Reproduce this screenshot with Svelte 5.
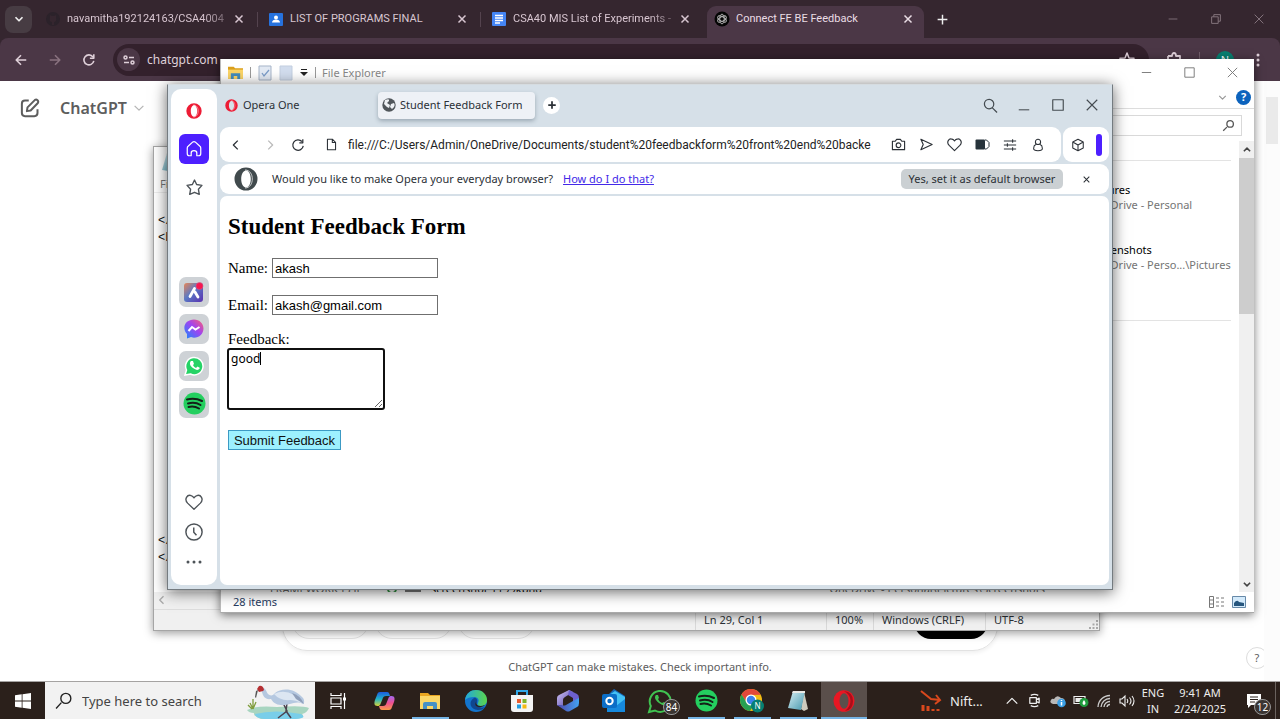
<script>
  const tabs = [
    { title: 'navamitha192124163/CSA4004', icon: 'github', faded: true },
    { title: 'LIST OF PROGRAMS FINAL', icon: 'classroom' },
    { title: 'CSA40 MIS List of Experiments -', icon: 'docs', faded: true },
    { title: 'Connect FE BE Feedback', icon: 'gpt', active: true }
  ];
  const pinned = ['taskview', 'copilot', 'folder', 'edge', 'store', 'm365', 'outlook', 'whatsapp', 'spotify', 'chrome', 'notepad', 'opera'];
  const running = ['folder', 'spotify', 'chrome', 'notepad', 'opera'];
  const sideApps = ['aria', 'messenger', 'wa', 'spot'];
  let address = $state('file:///C:/Users/Admin/OneDrive/Documents/student%20feedbackform%20front%20end%20backe');
  let name = $state('akash');
  let email = $state('akash@gmail.com');
  let feedback = $state('good');
</script>

{#snippet line(d, size = 16, w = 1.3)}
  <svg width={size} height={size} viewBox="0 0 16 16" fill="none" stroke="currentColor" stroke-width={w} stroke-linejoin="round" aria-hidden="true"><path {d} /></svg>
{/snippet}

{#snippet operaLogo(size, color)}
  <svg width={size} height={size} viewBox="0 0 24 24" aria-hidden="true"><path fill={color} fill-rule="evenodd" d="M12 .5a11.500 11.500 0 1 0 0 23 11.500 11.500 0 0 0 0-23Zm0 3c2.800 0 4.800 3.800 4.800 8.500s-2 8.500-4.800 8.500-4.800-3.800-4.800-8.500 2-8.500 4.800-8.500Z" /><path d="M11 3c5 0 7.300 4.500 7.300 9s-2.300 9-7.300 9" fill="none" stroke="#fff" stroke-width="1" opacity=".7" /></svg>
{/snippet}

{#snippet picture(kind)}
  {#if kind === 'github'}
    <svg width="16" height="16" viewBox="0 0 16 16"><circle cx="8" cy="8" r="7" fill="#2b222a" /><path d="M5 4l2 1h2l2-1v3c1 3-1 4-2 4v3H7v-3c-2 0-3-2-2-4Z" fill="#35262f" /></svg>
  {:else if kind === 'classroom'}
    <svg width="16" height="16" viewBox="0 0 16 16"><rect x="1" y="2" width="14" height="13" rx="1" fill="#2672de" /><circle cx="8" cy="6.500" r="2" fill="#fff" /><path d="M4 11.500c0-4 8-4 8 0Z" fill="#fff" /></svg>
  {:else if kind === 'docs'}
    <svg width="16" height="16" viewBox="0 0 16 16"><rect x="1" y="1" width="14" height="14" rx="1" fill="#4485f5" /><path d="M4 4.500h8M4 7h8M4 9.500h8M4 12h5" stroke="#fff" stroke-width="1.500" /></svg>
  {:else if kind === 'gpt'}
    <svg width="16" height="16" viewBox="0 0 16 16"><circle cx="8" cy="8" r="7.500" fill="#050505" /><g fill="none" stroke="#b5b5b5" stroke-width=".9"><ellipse cx="8" cy="8" rx="2.200" ry="4.800" /><ellipse cx="8" cy="8" rx="2.200" ry="4.800" transform="rotate(60 8 8)" /><ellipse cx="8" cy="8" rx="2.200" ry="4.800" transform="rotate(120 8 8)" /></g></svg>
  {:else if kind === 'taskview'}
    <svg width="18" height="18" viewBox="0 0 18 18" fill="none" stroke="#fff" stroke-width="1.200"><path d="M2 1v2.500h10V1M2 17v-2.500h10V17M2 6h10v6H2zM15.500 1v16" /><path d="M14 5.500h3v3h-3z" fill="#fff" stroke="none" /></svg>
  {:else if kind === 'copilot'}
    <svg width="23" height="22" viewBox="0 0 23 22"><defs><linearGradient id="ca" x1="0" y1="0" x2="0" y2="1"><stop offset="0" stop-color="#1c5be0" /><stop offset=".5" stop-color="#20b3c8" /><stop offset="1" stop-color="#d8d338" /></linearGradient><linearGradient id="cb" x1="0" y1="0" x2="0" y2="1"><stop offset="0" stop-color="#a468f0" /><stop offset=".5" stop-color="#ee5090" /><stop offset="1" stop-color="#f89a48" /></linearGradient></defs><path d="M7 2h7c2 0 2.500 2 3 4h-4c-2 0-3 1-3.500 3l-2 5c-.5 1.500-1.500 2-3 2C1 16 1 13 2 10l2-5c.5-2 1.300-3 3-3Z" fill="url(#ca)" /><path d="M16 20H9c-2 0-2.500-2-3-4h4c2 0 3-1 3.500-3l2-5c.5-1.500 1.500-2 3-2 3.500 0 3.500 3 2.500 6l-2 5c-.5 2-1.300 3-3 3Z" fill="url(#cb)" /></svg>
  {:else if kind === 'folder'}
    <svg width="21" height="20" viewBox="0 0 21 20"><path d="M0 2h8l2 2h10v14H0z" fill="#e9a520" /><path d="M0 5h20v13H0z" fill="#fbd667" /><path d="M3 18v-5q0-2 2-2h10q2 0 2 2v5h-4v-3H7v3z" fill="#4790c5" /></svg>
  {:else if kind === 'edge'}
    <svg width="24" height="24" viewBox="0 0 24 24"><defs><linearGradient id="ed" x1="0" y1="0" x2="1" y2="0"><stop offset="0" stop-color="#20a7de" /><stop offset="1" stop-color="#5bd54b" /></linearGradient></defs><circle cx="12" cy="12" r="11" fill="#1374cd" /><path d="M1 11C2 4 7 1 12 1c7 0 11 5 11 10 0 4-3 6-6 6s-4-1-3-3c2-4-1-6-4-6-4 0-7 1-9 3Z" fill="url(#ed)" /><path d="M10 9c-6 3-4 12 4 12 3 0 6-1 7-3-5 2-10-1-8-5 1-2-1-5-3-4Z" fill="#10468f" /><path d="M12 13c0 4 4 5 9 3-4 4-12 2-9-3Z" fill="#2b201b" /></svg>
  {:else if kind === 'store'}
    <svg width="24" height="24" viewBox="0 0 24 24"><path d="M7 6V2h10v4" fill="none" stroke="#31a8e8" stroke-width="2" /><path d="M1 6h22v14q0 3-3 3H4q-3 0-3-3z" fill="#f4f4f4" /><path d="M7 10h4v4H7z" fill="#e85a2d" /><path d="M12.500 10h4v4h-4z" fill="#7cb52b" /><path d="M7 15.500h4v4H7z" fill="#229de2" /><path d="M12.500 15.500h4v4h-4z" fill="#f4b913" /></svg>
  {:else if kind === 'm365'}
    <svg width="24" height="24" viewBox="0 0 24 24"><defs><linearGradient id="ma" x1="0" y1="0" x2="1" y2="1"><stop offset="0" stop-color="#d5c7f8" /><stop offset="1" stop-color="#4638a0" /></linearGradient><linearGradient id="mb"><stop offset="0" stop-color="#5145ac" /><stop offset="1" stop-color="#43a2f0" /></linearGradient></defs><path d="M13 1 3 6Q1 7 1 9v7l6 3v-8q0-2 2-3l8-5z" fill="url(#ma)" /><path d="m13 1 8 4q2 1 2 4v5l-6-2V9l-5-3z" fill="#6d60cf" /><path d="m1 16 9 6q2 1 4 0l7-4q2-1 2-4V9l-6 3-7 4q-2 1-4 0z" fill="url(#mb)" /></svg>
  {:else if kind === 'outlook'}
    <svg width="24" height="24" viewBox="0 0 24 24"><path d="M12 0 23 7v14H5V7z" fill="#1668b8" /><path d="m7 6 6-4 10 6v5L13 18z" fill="#42c1f5" /><path d="m5 11 9 6 9-7v13H5z" fill="#1689dd" /><rect y="5" width="15" height="14" rx="2" fill="#0b6ec7" /><circle cx="7.500" cy="12" r="3.200" fill="none" stroke="#fff" stroke-width="2" /></svg>
  {:else if kind === 'whatsapp'}
    <svg width="26" height="26" viewBox="0 0 26 26"><path d="m2 24 1.800-6A10.500 10.500 0 1 1 8 22.500Z" fill="#2b201b" stroke="#40c351" stroke-width="2" /><path d="M9 7c-2 2-1 5 3 8s6 3 8 1l-3-2-2 1c-2-1-3-2-4-4l1-1-1-3Z" fill="#40c351" /></svg>
  {:else if kind === 'spotify' || kind === 'spot'}
    <svg width="23" height="23" viewBox="0 0 23 23"><circle cx="11.500" cy="11.500" r="11" fill="#24cf5f" /><path d="M4 7.500q8-2 15 1.500M5 11.500q7-2 12.500 1.500M5.500 15q5.500-1.500 10.500 1.500" fill="none" stroke="#142018" stroke-width="2" stroke-linecap="round" /></svg>
  {:else if kind === 'chrome'}
    <svg width="24" height="26" viewBox="0 0 24 26"><circle cx="11" cy="12" r="11" fill="#f3bd13" /><path d="M1.500 6.500A11 11 0 0 1 20.600 6.700L11 7 6.700 14.500Z" fill="#e2483b" /><path d="M1.500 6.500A11 11 0 0 0 10 23l5-8.500H6.700Z" fill="#27a052" /><circle cx="11" cy="12" r="5.500" fill="#fff" /><circle cx="11" cy="12" r="4.200" fill="#3b82eb" /><circle cx="17.500" cy="18" r="6.500" fill="#067f72" /><text x="17.500" y="21" fill="#fff" font-size="8" text-anchor="middle">N</text></svg>
  {:else if kind === 'notepad'}
    <svg width="22" height="22" viewBox="0 0 22 22"><defs><linearGradient id="np" x2="1" y2="1"><stop offset="0" stop-color="#d9f0f5" /><stop offset="1" stop-color="#4597ad" /></linearGradient></defs><path d="m17 2 4 17-4 2-3-2z" fill="#cfcabc" /><path d="M6 1h12l-4 19L1 18z" fill="url(#np)" /><path d="M6 1h12v2H5z" fill="#e9e9e5" /></svg>
  {:else if kind === 'opera'}
    <svg width="22" height="22" viewBox="0 0 22 22"><ellipse cx="11" cy="11" rx="10.500" ry="10.800" fill="#e81723" /><path d="M11 1q9 1 9 10t-8 10c8-6 7-16-1-20Z" fill="#a90d19" /><ellipse cx="11" cy="11" rx="4.500" ry="7.800" fill="#5a4f4b" /></svg>
  {:else if kind === 'aria'}
    <svg width="20" height="20" viewBox="0 0 20 20"><defs><linearGradient id="ar" x1="0" y1="0" x2="1" y2="1"><stop offset="0" stop-color="#e98555" /><stop offset=".45" stop-color="#5a7ac5" /><stop offset="1" stop-color="#5a30b0" /></linearGradient></defs><rect y="1" width="19" height="19" rx="3" fill="url(#ar)" /><path d="m6 14.500 4.500-8M11 10l3 5" stroke="#fff" stroke-width="2.800" stroke-linecap="round" /><circle cx="15.500" cy="4" r="3.500" fill="#f8174f" stroke="#c95c8a" stroke-width=".6" /></svg>
  {:else if kind === 'messenger'}
    <svg width="20" height="20" viewBox="0 0 20 20"><defs><linearGradient id="ms" x1="1" y1="0" x2="0" y2="1"><stop offset="0" stop-color="#ff6070" /><stop offset=".45" stop-color="#a044f0" /><stop offset="1" stop-color="#168aff" /></linearGradient></defs><path d="M10 .5c5.500 0 9.500 4 9.500 9s-4 9.300-9.500 9.300L7 18l-4 1.500V15C-3 8 2 .5 10 .5Z" fill="url(#ms)" /><path d="m4.500 12 3.500-4 3.500 2.500L15.500 8" fill="none" stroke="#fff" stroke-width="2" /></svg>
  {:else if kind === 'wa'}
    <svg width="20" height="20" viewBox="0 0 20 20"><path d="m1 19 1.500-5A8.700 8.700 0 1 1 6.500 18Z" fill="#25d366" stroke="#fff" stroke-width="1.500" /><path d="M7 5c-2 2-1 5 2 7s5 3 7 0l-2.500-1.500L12 12c-2-1-2.500-2-3-3l1-1-1-3Z" fill="#fff" /></svg>
  {/if}
{/snippet}

<main class="desktop">
  <section class="browser" aria-label="Browser">
    <div class="tabstrip">
      <button class="tabsearch" aria-label="Search tabs">{@render line('m4 6 4 4 4-4', 14, 2)}</button>
      {#each tabs as tab}
        <div class="tab" class:active={tab.active}>
          {@render picture(tab.icon)}
          <span class:faded={tab.faded}>{tab.title}</span>
          <button aria-label="Close tab">{@render line('m4 4 8 8M12 4l-8 8', 14, 1.700)}</button>
        </div>
      {/each}
      <button class="newtab" aria-label="New tab">{@render line('M8 2v12M2 8h12', 13, 1.800)}</button>
      <div class="winctl dim">
        <button aria-label="Minimize">{@render line('M3 8h10', 14, 1)}</button>
        <button aria-label="Restore">{@render line('M3 5.500h7.500V13H3zM5.500 5.500V3H13v7.500h-2.500', 14, 1.100)}</button>
        <button aria-label="Close">{@render line('m3 3 10 10M13 3 3 13', 14, 1.100)}</button>
      </div>
    </div>
    <div class="toolbar">
      <button aria-label="Back">{@render line('M14 8H3m5-5.500L2.500 8 8 13.500', 14, 1.800)}</button>
      <button class="off" aria-label="Forward">{@render line('M2 8h11M8 2.500 13.500 8 8 13.500', 14, 1.800)}</button>
      <button aria-label="Reload">{@render line('M13.500 9A5.700 5.700 0 1 1 12.500 4.500M13.500 1.500V6H9', 14, 1.800)}</button>
      <div class="omni">
        <span class="site">{@render line('M3 5.500a1.500 1.500 0 1 0 3 0 1.500 1.500 0 0 0-3 0M8 5.500h5M10 10.500a1.500 1.500 0 1 0 3 0 1.500 1.500 0 0 0-3 0M3 10.500h5', 16, 1.500)}</span>
        <span class="host">chatgpt.com</span>
        {@render line('m8 1 2 5 5 .3-4 3.200 1.300 5L8 12l-4.300 2.500L5 9.500 1 6.300 6 6Z', 16, 1.500)}
      </div>
      <button aria-label="Extensions">{@render line('M2 4h4c0-4 4-4 4 0h4v4M2 4v4', 16, 1.800)}</button>
      <i></i>
      <span class="avatar">N</span>
      <button class="kebab" aria-label="Menu"><svg width="4" height="16" viewBox="0 0 4 16" fill="currentColor"><circle cx="2" cy="3" r="1.500" /><circle cx="2" cy="8" r="1.500" /><circle cx="2" cy="13" r="1.500" /></svg></button>
    </div>
    <div class="gpt">
      <header>
        <button aria-label="New chat">{@render line('M7 2H4Q1.500 2 1.500 4.500V12Q1.500 14.500 4 14.500h7.500Q14 14.500 14 12V9M6 7.500 12 1.500Q13 .8 14 1.800t.3 2.200L8.500 10 5.500 10.500Z', 20, 1.600)}</button>
        <strong>ChatGPT</strong>
        {@render line('m3 5.500 5 5 5-5', 14, 1.400)}
      </header>
      <div class="composer"><b></b><b></b><b></b><em></em></div>
      <p>ChatGPT can make mistakes. Check important info.</p>
      <button class="help">?</button>
      <div class="gscroll"><i></i></div>
    </div>
  </section>

  <section class="window editor" aria-label="Text editor">
    <div class="ntitle">{@render picture('notepad')}</div>
    <div class="nmenu">File</div>
    <div class="code"><pre>{'</\n<b'}</pre><pre>{'</\n</'}</pre></div>
    <div class="hscroll">{@render line('M10 3 5 8l5 5', 12, 1.800)}</div>
    <footer><span class="pos">Ln 29, Col 1</span><span class="zoom">100%</span><span class="eol">Windows (CRLF)</span><span class="enc">UTF-8</span>
      <svg width="10" height="10" viewBox="0 0 10 10" fill="#aaa"><path d="M7 0h2v2H7zM7 3.500h2v2H7zM3.500 3.500h2v2h-2zM7 7h2v2H7zM3.500 7h2v2h-2zM0 7h2v2H0z" /></svg>
    </footer>
  </section>

  <section class="window explorer" aria-label="File Explorer">
    <div class="etitle">
      <svg width="15" height="15" viewBox="0 0 21 20"><path d="M0 2h8l2 2h11v15H0z" fill="#dba01d" /><path d="M0 6h21v13H0z" fill="#fbd466" /><path d="M4 19v-8h13v8h-4v-4H8v4z" fill="#438cbc" /></svg>
      <u></u>
      <svg class="sheet" width="14" height="16" viewBox="0 0 14 16"><path d="M1 1h12v14H1z" fill="#e3eaf4" stroke="#a7b5c9" /><path d="m4 8 2 3 5-6" fill="none" stroke="#7b9cc8" stroke-width="1.300" /></svg>
      <svg width="14" height="16" viewBox="0 0 14 16"><path d="M1 1h12v14H1z" fill="#d2ddee" stroke="#c3cfe0" /></svg>
      <svg width="8" height="8" viewBox="0 0 8 8"><path d="M1 0h6v1H1zM0 3h8L4 7z" fill="#222" /></svg>
      <u></u>
      <span>File Explorer</span>
      <div class="winctl">
        <button aria-label="Minimize">{@render line('M3 8h10', 15, 1)}</button>
        <button aria-label="Maximize">{@render line('M3 3h10v10H3z', 15, 1)}</button>
        <button aria-label="Close">{@render line('m3 3 10 10M13 3 3 13', 15, 1)}</button>
      </div>
    </div>
    <div class="ribbon">{@render line('m4 6 4 4 4-4', 13, 1.500)}<button aria-label="Help">?</button></div>
    <div class="esearch"><div>{@render line('M6 10 1.500 14.500M6 6a4 4 0 1 0 8 0 4 4 0 0 0-8 0', 13, 1.600)}</div></div>
    <div class="ebody">
      <div class="results">
        <div class="item one"><div><b>Pictures</b><span>OneDrive - Personal</span></div></div>
        <div class="item two"><div><b>Screenshots</b><span>OneDrive - Perso...\Pictures</span></div></div>
        <div class="filerow"><span class="fw">FRAMEWORK IS JF</span><svg width="34" height="14" viewBox="0 0 34 14"><circle cx="5" cy="7" r="4" fill="none" stroke="#369344" stroke-width="2" /><path d="M18 2h16v10H18z" fill="#777" /></svg><b>screenshot 1199kbnd</b><span class="where">OneDrive - Personal\Pictures\Screenshots</span></div>
      </div>
      <div class="vscroll"><span>{@render line('m3 10 5-5 5 5', 10, 2.500)}</span><i></i><span class="dn">{@render line('m3 6 5 5 5-5', 10, 2.500)}</span></div>
    </div>
    <footer><span>28 items</span>
      <svg width="16" height="12" viewBox="0 0 16 12" fill="none" stroke="#777"><path d="M.5.500h4v11h-4zM.5 4h4M.5 8h4M7 2h3M7 6h3M7 10h3M12 2h3M12 6h3M12 10h3" /></svg>
      <svg width="14" height="12" viewBox="0 0 14 12"><path d="M.5.500h13v11H.5z" fill="#d3eafb" stroke="#6789a8" /><path d="M2 7q3-4 5-1l5 1v3H2z" fill="#26567e" /></svg>
    </footer>
  </section>

  <section class="window front" aria-label="Opera">
    <aside>
      <button aria-label="Opera menu">{@render operaLogo(16, '#ed1c35')}</button>
      <button class="home" aria-label="Home">{@render line('M2 7Q2 6 3 5.300l4-3.600Q8 1 9 1.700l4 3.600Q14 6 14 7v5q0 2-2 2h-1.500v-2.500q0-2-2.500-2t-2.500 2V14H4q-2 0-2-2Z', 18, 1.100)}</button>
      <button aria-label="Bookmarks">{@render line('m8 1 2 4.200 5 .8-3.300 3.700.8 4.800L8 12.500 3.500 14.500l.8-4.800L1 6l5-.8Z', 17, 1.300)}</button>
      <div class="apps">
        {#each sideApps as app}<button aria-label={app}>{@render picture(app)}</button>{/each}
      </div>
      <button class="last" aria-label="Favourites">{@render line('M8 14.500 2.300 9C-1 5.500 2 1 5.500 2.300Q7 2.800 8 4.300q1-1.500 2.500-2C14 1 17 5.500 13.700 9Z', 18, 1.200)}</button>
      <button aria-label="History">{@render line('M8 .8a7.200 7.200 0 1 0 0 14.400A7.200 7.200 0 0 0 8 .8M7.800 4v4.200l2.400 2.600', 18, 1.300)}</button>
      <button aria-label="More"><svg width="16" height="4" viewBox="0 0 16 4" fill="currentColor"><circle cx="2" cy="2" r="1.500" /><circle cx="8" cy="2" r="1.500" /><circle cx="14" cy="2" r="1.500" /></svg></button>
    </aside>
    <div class="omain">
      <div class="otabs">
        <div class="ostart">{@render operaLogo(13, '#ed1c35')}<span>Opera One</span></div>
        <div class="otab"><svg width="14" height="14" viewBox="0 0 14 14"><circle cx="7" cy="7" r="6.700" fill="#50565b" /><path d="M3 2q5-2 4 1L5 5l3 2-1 3-2-1-3-3zM9 6l3-1q2 3-2 6l-2-2z" fill="#eef1f5" /></svg><span>Student Feedback Form</span></div>
        <button class="plus" aria-label="New tab">{@render line('M8 2v12M2 8h12', 10, 2.800)}</button>
        <div class="octl">
          <button aria-label="Search">{@render line('M1.500 6.500a5 5 0 1 0 10 0 5 5 0 0 0-10 0M10 10.500l5 5', 15, 1.300)}</button>
          <button aria-label="Minimize">{@render line('M2 13.500h12', 14, 1.200)}</button>
          <button aria-label="Maximize">{@render line('M2 2h12v12H2z', 14, 1.300)}</button>
          <button aria-label="Close">{@render line('m2 2 12 12M14 2 2 14', 14, 1.300)}</button>
        </div>
      </div>
      <div class="obar">
        <div class="addr">
          <button aria-label="Back">{@render line('M10 3 5 8l5 5', 14, 1.500)}</button>
          <button class="pale" aria-label="Forward">{@render line('m6 3 5 5-5 5', 14, 1.500)}</button>
          <button aria-label="Reload">{@render line('M14 9A6 6 0 1 1 12.500 4M13.500 1.500v4h-4', 14, 1.400)}</button>
          <span class="doc">{@render line('M3 1.500h6L13 5.500v9H3ZM9 1.500v4h4', 13, 1.300)}</span>
          <input aria-label="Address" bind:value={address} />
          <div class="tools">
            <button aria-label="Snapshot">{@render line('M1.500 4.500h3l1.500-2h4l1.500 2h3v9h-13ZM5.500 8.800a2.500 2.500 0 1 0 5 0 2.500 2.500 0 0 0-5 0', 15, 1.200)}</button>
            <button aria-label="Flow">{@render line('m2 2.500 12 5.500-12 5.500L4.500 8Z', 15, 1.200)}</button>
            <button aria-label="Pin">{@render line('M8 14.500 2.300 9C-1 5.500 2 1 5.500 2.300Q7 2.800 8 4.300q1-1.500 2.500-2C14 1 17 5.500 13.700 9Z', 15, 1.200)}</button>
            <button aria-label="Battery saver"><svg width="15" height="11" viewBox="0 0 15 11"><rect x=".5" y=".5" width="9.500" height="10" rx="1" fill="#26333b" /><path d="M10 1h1.500l2.500 2.500v4L11.500 10H10" fill="none" stroke="#26333b" /></svg></button>
            <button aria-label="Setup">{@render line('M1 3.500h14M1 8h14M1 12.500h14M11 1.500v4M5 6v4M11 10.500v4', 14, 1.200)}</button>
            <button aria-label="Profile">{@render line('M5 4.500a3 3 0 1 0 6 0 3 3 0 0 0-6 0M5.500 7.500C3 8.500 3 11 3 12q0 2.500 5 2.500t5-2.500q0-3.500-2.500-4.500', 14, 1.200)}</button>
          </div>
        </div>
        <div class="side"><button aria-label="Extensions">{@render line('m8 1.500 6 3v7l-6 3-6-3v-7ZM2 4.500 8 8l6-3.500M8 8v6.500', 14, 1.200)}</button><i></i></div>
      </div>
      <div class="prompt">
        {@render operaLogo(24, '#414a4d')}
        <span>Would you like to make Opera your everyday browser?</span>
        <a href="#how">How do I do that?</a>
        <button class="yes">Yes, set it as default browser</button>
        <button class="x" aria-label="Dismiss">{@render line('m3 3 10 10M13 3 3 13', 9, 1.800)}</button>
      </div>
      <div class="page">
        <h2>Student Feedback Form</h2>
        <form onsubmit={(e) => e.preventDefault()}>
          <div class="field"><label for="name">Name:</label><input id="name" bind:value={name} /></div>
          <div class="field"><label for="email">Email:</label><input id="email" bind:value={email} /></div>
          <div class="area"><label for="feedback">Feedback:</label><div class="tbox"><textarea id="feedback" spellcheck="false" bind:value={feedback}></textarea><i class="caret"></i></div></div>
          <button class="submit">Submit Feedback</button>
        </form>
      </div>
    </div>
  </section>

  <nav class="taskbar" aria-label="Taskbar">
    <button class="start" aria-label="Start"><svg width="16" height="16" viewBox="0 0 16 16" fill="#fff"><path d="m0 2.300 6.700-1V7.600H0zM7.500 1.200 16 0v7.600H7.500zM0 8.400h6.700v6.400L0 13.800zM7.500 8.400H16V16l-8.500-1.200z" /></svg></button>
    <div class="search">
      {@render line('M6 10 1 15.500M5.500 6a4.700 4.700 0 1 0 9.400 0 4.700 4.700 0 0 0-9.400 0', 17, 1.300)}
      <input aria-label="Search" placeholder="Type here to search" />
      <svg class="crane" width="64" height="34" viewBox="0 0 64 34"><path d="M1 25q10-5 30-3 26-2 32 1-2 5-7 6 5 5-12 5H15q-8-3-7-6-5 0-7-3Z" fill="#a8d5c0" /><path d="M9 29q20-5 46 0 8 5-10 5H18q-9-1-9-5Z" fill="#79cee9" /><path d="m7 24-3-6M7 24V14M7 24l3-7M6 24l-4-4" stroke="#7f9c3c" stroke-width="1.300" /><path d="m37 18 4 8-9 7M41 18l-1 8 5 7" fill="none" stroke="#4c4350" stroke-width="1.500" /><path d="M14 3c5-2 6 3 8 6 2 2 5 2 7-1 6-5 19-6 28 5 2 3 1 6 0 6-5-3-9-1-13 0-7 2-15 2-19-5-6 1-8-3-9-7Z" fill="#b5c8e0" /><path d="M28 9q10-5 20 1 5 3 8 8-7-3-12-3-10 1-16-6Z" fill="#dce6f2" /><path d="M46 8q8 2 12 11l-8-5Z" fill="#8f9fba" /><path d="M18 5q-1-5-5-4l-2 3 2 3 4-1Z" fill="#b52f32" /><path d="m12 5-2 8-1-1 1-6Z" fill="#555" /></svg>
    </div>
    {#each pinned as app}
      <button class="task" class:current={app === 'opera'} class:running={running.includes(app)} aria-label={app}>{@render picture(app)}{#if app === 'whatsapp'}<span class="count">84</span>{/if}</button>
    {/each}
    <div class="tray">
      <div class="news"><svg width="22" height="22" viewBox="0 0 22 22" fill="none" stroke="#d9481d" stroke-width="2"><path d="m1 1 10 8 9 1M16 5l4 5-5 4" /><path d="M3 21v-6M8 21v-5M13 21v-2M18 21v-2" stroke-width="3" /></svg><span>Nift...</span></div>
      <span class="ti">{@render line('m2 11 6-6 6 6', 14, 1.500)}</span>
      <span class="ti">{@render line('M3 5h7v6H3zM10 7l3-1.500v5L10 9M4 2.500q4-2 8 0M4 13.500q4 2 8 0', 15, 1.300)}</span>
      <span class="ti"><svg width="16" height="14" viewBox="0 0 16 14"><path d="M3 10q-4-1-2-4 1-2 3-1 3-5 7-1 4 0 4 4l-3 2z" fill="#b8b8b8" /><circle cx="11.500" cy="9" r="4.300" fill="#3ba0e6" /><path d="M11.500 8v3.500M11.500 6v1" stroke="#fff" stroke-width="1.500" /></svg></span>
      <span class="ti"><svg width="16" height="14" viewBox="0 0 16 14"><path d="M1 2.500h11v7H1z" fill="none" stroke="#eee" stroke-width="1.200" /><path d="M2.500 4h7v4h-7z" fill="#eee" /><circle cx="11" cy="8.500" r="4.500" fill="#1f9b3d" /><path d="M11 6q-3 4 0 5 3-1 0-5Z" fill="#fff" /></svg></span>
      <span class="ti"><svg width="14" height="14" viewBox="0 0 14 14" fill="none" stroke="#ccc" stroke-width="1.300"><path d="M1 13A12 12 0 0 1 13 1.500M4 13a9 9 0 0 1 9-8.500M7 13a6 6 0 0 1 6-5.500M10 13a3 3 0 0 1 3-2.500" /></svg></span>
      <span class="ti"><svg width="16" height="14" viewBox="0 0 16 14" fill="none" stroke="#eee" stroke-width="1.100"><path d="M1 5h2l3-3v10L3 9H1zM8 5q1.500 2 0 4M10.500 3.500q3 3.500 0 7M13 2q4 5 0 10" /></svg></span>
      <span class="lang">ENG<br />IN</span>
      <span class="clock">9:41 AM<br />2/24/2025</span>
      <button class="notes" aria-label="Notifications"><svg width="16" height="16" viewBox="0 0 16 16"><path d="M1 1h14v11H5l-3 3v-3H1z" fill="#fff" /><path d="M4 4h8M4 6.500h8M4 9h5" stroke="#2b201b" /></svg><span class="count">12</span></button>
    </div>
  </nav>
</main>

<style>
  :global(body) { margin: 0; }
  * { box-sizing: border-box; }
  svg { flex: none; display: block; }
  button { border: 0; padding: 0; background: none; color: inherit; font: inherit; display: flex; align-items: center; justify-content: center; }
  .desktop { position: relative; height: 100vh; min-height: 600px; overflow: hidden; display: flex; flex-direction: column; font: 11px/16px "Noto Sans", "Open Sans", sans-serif; color: #2b3036; }
  .browser { flex: 1; display: flex; flex-direction: column; background: #35262f; }
  .tabstrip { display: flex; height: 38px; align-items: center; padding-left: 5px; color: #d8c6d1; }
  .tabsearch { width: 27px; height: 27px; border-radius: 8px; background: #473c43; margin-right: 3px; color: #eee; }
  .tab { position: relative; width: 223px; height: 32px; display: flex; align-items: center; padding: 0 10px; gap: 6px; font-family: Roboto, "Noto Sans", sans-serif; }
  .tab span { flex: 1; white-space: nowrap; overflow: hidden; }
  .tab .faded { mask-image: linear-gradient(90deg, #000 85%, #0005); }
  .tab button { width: 14px; margin-right: 2px; }
  .tab:not(.active):not(:nth-child(4))::after { content: ""; position: absolute; right: 0; width: 1px; height: 15px; background: #54434e; }
  .tab.active { width: 217px; margin: 6px 0 0 3px; padding: 0 7px 6px; background: #4b3746; border-radius: 9px 9px 0 0; color: #eadde5; }
  .newtab { width: 37px; color: #eee; }
  .winctl { display: flex; margin-left: auto; }
  .winctl button { width: 43px; height: 24px; color: #777; }
  .dim button { color: #85767e; }
  .toolbar { display: flex; align-items: center; height: 43px; background: #4b3746; border-radius: 8px 8px 0 0; color: #dfd0d9; padding-left: 4px; padding-right: 6px; }
  .toolbar > button { width: 34px; }
  .toolbar .off { color: #89727f; }
  .omni { flex: 1; height: 32px; border-radius: 16px; background: #33212c; display: flex; align-items: center; gap: 7px; padding: 0 14px 0 4px; margin: 0 8px 0 7px; font-size: 12px; }
  .host { flex: 1; }
  .site { width: 23px; height: 23px; border-radius: 12px; background: #4b3746; display: grid; place-items: center; }
  .toolbar > i { width: 1px; height: 15px; background: #705d69; margin: 0 16px 0 8px; }
  .avatar { width: 18px; height: 18px; border-radius: 9px; background: #087f70; color: #fff; text-align: center; line-height: 18px; }
  .toolbar .kebab { margin-left: 8px; width: 32px; }
  .gpt { flex: 1; position: relative; display: flex; flex-direction: column; align-items: center; background: #fff; color: #5d5d5d; }
  .gpt header { align-self: stretch; display: flex; align-items: center; gap: 4px; height: 54px; padding-left: 20px; color: #5d5d5d; }
  .gpt header button { width: 20px; margin-right: 16px; }
  .gpt header strong { font-size: 16px; font-weight: 600; margin-right: 1px; }
  .gpt header > :global(svg) { color: #b4b4b4; }
  .composer { margin-top: auto; width: 56%; height: 90px; border: 1px solid #e2e2e2; border-radius: 25px; box-shadow: 0 2px 4px #0001; display: flex; align-items: flex-end; gap: 6px; padding: 0 9px 11px 9px; }
  .composer b { width: 77px; height: 34px; border: 1px solid #e6e6e6; border-radius: 17px; }
  .composer em { margin-left: auto; width: 74px; height: 34px; border-radius: 17px; background: #000; }
  .gpt p { margin: 8px 0 6px; }
  .help { position: absolute; right: 12px; bottom: 12px; width: 22px; height: 22px; border: 1px solid #ddd; border-radius: 11px; }
  .gscroll { position: absolute; right: 0; top: 0; bottom: 0; width: 16px; padding: 16px 2px 0; background: #fcfcfc; }
  .gscroll i { display: block; height: 47px; background: #eaeaea; }

  .window { position: absolute; display: flex; flex-direction: column; background: #fff; }
  .editor { left: 153px; right: 180px; top: 146px; bottom: 88px; border: 1px solid #a5a5a5; box-shadow: 0 2px 9px #0006; }
  .ntitle { height: 29px; padding: 5px 7px; }
  .nmenu { height: 17px; padding-left: 6px; color: #777; background: #fff; border-bottom: 1px solid #eee; }
  .code { flex: 1; display: flex; flex-direction: column; justify-content: space-between; padding: 20px 4px 25px; }
  .code pre { margin: 0; font: 12px/17px "Liberation Mono", monospace; color: #111; }
  .hscroll { height: 17px; background: #f0f0f0; padding: 2px; color: #aaa; }
  .editor footer { position: relative; height: 21px; background: #f0f0f0; border-top: 1px solid #ddd; display: flex; justify-content: flex-end; line-height: 20px; }
  .editor footer span { padding-left: 8px; border-left: 1px solid #d8d8d8; white-space: nowrap; }
  .pos { width: 131px; } .zoom { width: 47px; } .eol { width: 112px; } .enc { width: 104px; }
  .editor footer svg { margin: 10px 0 0; }

  .explorer { left: 220px; right: 26px; top: 59px; bottom: 106px; box-shadow: 0 2px 9px #0008; border-bottom: 1px solid #aaa; border-left: 1px solid #bbb; }
  .etitle { display: flex; align-items: center; height: 27px; padding-left: 7px; gap: 7px; color: #888; }
  .etitle u { width: 1px; height: 11px; background: #999; margin: 0 -1px 0 0; }
  .etitle .sheet { margin-left: 1px; }
  .ribbon { display: flex; height: 23px; align-items: center; justify-content: flex-end; gap: 7px; padding-right: 3px; border-bottom: 1px solid #ddd; color: #999; }
  .ribbon button { width: 15px; height: 15px; border-radius: 8px; background: #0c63bd; color: #fff; font-weight: 700; }
  .esearch { height: 32px; padding: 6px 12px 5px; color: #555; }
  .esearch div { height: 21px; border: 1px solid #d9d9d9; display: flex; justify-content: flex-end; align-items: center; padding-right: 6px; }
  .ebody { flex: 1; display: flex; min-height: 0; overflow: hidden; }
  .results { flex: 1; padding: 19px 8px 0 0; display: flex; flex-direction: column; }
  .item { display: flex; justify-content: flex-end; line-height: 15px; }
  .item div { width: 142px; display: flex; flex-direction: column; white-space: nowrap; }
  .item b { font-weight: 400; color: #000; } .item span { color: #757575; }
  .one { border-top: 1px solid #e3e3e3; padding-top: 21px; height: 82px; }
  .two { border-bottom: 1px solid #e3e3e3; height: 79px; }
  .filerow { margin-top: auto; height: 20px; display: flex; align-items: center; padding-left: 49px; margin-bottom: -7px; color: #666; white-space: nowrap; }
  .filerow .fw { width: 117px; } .filerow b { font-weight: 400; color: #111; margin-left: 10px; } .filerow .where { margin-left: auto; margin-right: 186px; }
  .vscroll { width: 15px; background: #f0f0f0; display: flex; flex-direction: column; }
  .vscroll span { height: 17px; display: grid; place-items: center; color: #444; }
  .vscroll i { height: 156px; background: #cdcdcd; } .vscroll .dn { margin-top: auto; }
  .explorer footer { height: 20px; display: flex; align-items: center; padding: 0 8px 0 12px; gap: 7px; color: #273b61; }
  .explorer footer span { flex: 1; }

  .front { left: 167px; right: 167px; top: 84px; bottom: 129px; flex-direction: row; gap: 3px; padding: 0 3px 4px; background: #d6e0e8; border: 1px solid #747b80; border-top-color: #d6dce0; box-shadow: 0 2px 14px #0009; }
  aside { width: 46px; margin-top: 4px; padding: 7px 0 8px; background: #fff; border-radius: 10px; display: flex; flex-direction: column; align-items: center; color: #4d5358; }
  aside button { width: 30px; height: 30px; }
  aside > button:nth-child(-n+2) { margin-bottom: 8px; }
  .home { background: #4d1fff; border-radius: 6px; color: #fff; }
  .apps { display: flex; flex-direction: column; gap: 7px; margin-top: 75px; }
  .apps button { background: #ced2d6; border-radius: 7px; }
  .last { margin-top: auto; }
  .omain { flex: 1; min-width: 0; display: flex; flex-direction: column; gap: 2px; color: #2b3036; }
  .otabs { height: 40px; display: flex; align-items: center; padding-left: 5px; }
  .ostart { width: 153px; display: flex; gap: 5px; align-items: center; }
  .otab { width: 157px; height: 27px; background: #eef1f6; border-radius: 4px; box-shadow: 0 2px 4px #4566; display: flex; align-items: center; padding-left: 4px; gap: 4px; white-space: nowrap; }
  .plus { width: 17px; height: 17px; border-radius: 9px; background: #fff; margin-left: 8px; }
  .octl { margin-left: auto; display: flex; color: #444b50; } .octl button { width: 34px; }
  .obar { display: flex; gap: 2px; height: 35px; }
  .addr { flex: 1; min-width: 0; display: flex; align-items: center; background: #fff; border-radius: 9px; padding-left: 9px; }
  .addr > button { width: 14px; margin-right: 20px; } .addr > button:nth-child(2) { margin-right: 14px; } .addr .pale { color: #bbb; }
  .doc { width: 13px; margin-right: 10px; }
  .addr input { flex: 1; min-width: 0; border: 0; padding: 0; outline: 0; background: none; font: 12px Roboto, "Noto Sans", sans-serif; color: #222; }
  .tools { display: flex; margin-left: 9px; padding-right: 9px; } .tools button { width: 28px; }
  .side { width: 46px; background: #fff; border-radius: 9px; display: flex; align-items: center; padding-left: 8px; gap: 11px; }
  .side i { width: 6px; height: 22px; border-radius: 3px; background: #4d1fff; }
  .prompt { height: 30px; background: #fff; border-radius: 9px; display: flex; align-items: center; padding: 0 18px 0 14px; white-space: nowrap; }
  .prompt span { margin: 0 10px 0 14px; } .prompt a { color: #4329e8; }
  .yes { margin-left: auto; width: 162px; height: 20px; border-radius: 5px; background: #cbd0d3; } .x { width: 9px; margin-left: 19px; }
  .page { flex: 1; background: #fff; border-radius: 7px; padding: 18px 8px; font: 15px/18px "Liberation Serif", serif; color: #000; }
  h2 { margin: 0 0 18px; font-size: 23px; line-height: 26px; }
  form { display: flex; flex-direction: column; align-items: flex-start; }
  .field { display: flex; align-items: center; gap: 4px; height: 20px; margin-bottom: 17px; }
  .field input { width: 166px; height: 20px; border: 1px solid #6f6f6f; padding: 1px 2px; font: 13px "Liberation Sans", Arial, sans-serif; }
  .area { display: flex; flex-direction: column; margin: -2px 0 20px; } .tbox { position: relative; margin: 0 -1px; }
  textarea { display: block; width: 158px; height: 62px; padding: 0 2px; border: 2px solid #101010; border-radius: 3px; font: 12px/17px "Noto Sans", sans-serif; outline: 0; }
  .caret { position: absolute; left: 33px; top: 4px; width: 1px; height: 13px; background: #000; }
  .submit { width: 113px; height: 20px; border: 1px solid #3c9ac4; background: #9df1ff; font: 13px "Liberation Sans", Arial, sans-serif; color: #111; }

  .taskbar { position: relative; height: 38px; display: flex; background: #2b201b; border-top: 1px solid #a5a3a2; color: #eee; }
  .start { width: 45px; }
  .search { width: 270px; background: #f2f2f2; color: #222; display: flex; align-items: center; padding: 0 5px 0 10px; gap: 10px; }
  .search input { flex: 1; min-width: 0; border: 0; background: none; padding: 0; font: 13px "Noto Sans", sans-serif; }
  .search input::placeholder { color: #444; } .crane { align-self: flex-end; }
  .task { position: relative; width: 46px; }
  .running::after { content: ""; position: absolute; bottom: 0; left: 5px; right: 4px; height: 2px; background: #76b5e6; }
  .current { background: #5a4f4b; } .current::after { left: 0; right: 0; }
  .count { position: absolute; left: 26px; top: 17px; width: 17px; height: 16px; border: 1px solid #999; border-radius: 8px; background: #3b3532; color: #fff; font-size: 10px; line-height: 14px; text-align: center; }
  .tray { margin-left: auto; padding-right: 4px; display: flex; align-items: center; }
  .news { display: flex; align-items: center; gap: 8px; font-size: 13px; width: 80px; }
  .ti { width: 23px; display: grid; place-items: center; }
  .lang, .clock { text-align: center; line-height: 16px; width: 30px; } .clock { width: 64px; }
  .notes { position: relative; width: 44px; align-self: stretch; border-right: 1px solid #6a625e; } .notes .count { left: 22px; }
</style>
